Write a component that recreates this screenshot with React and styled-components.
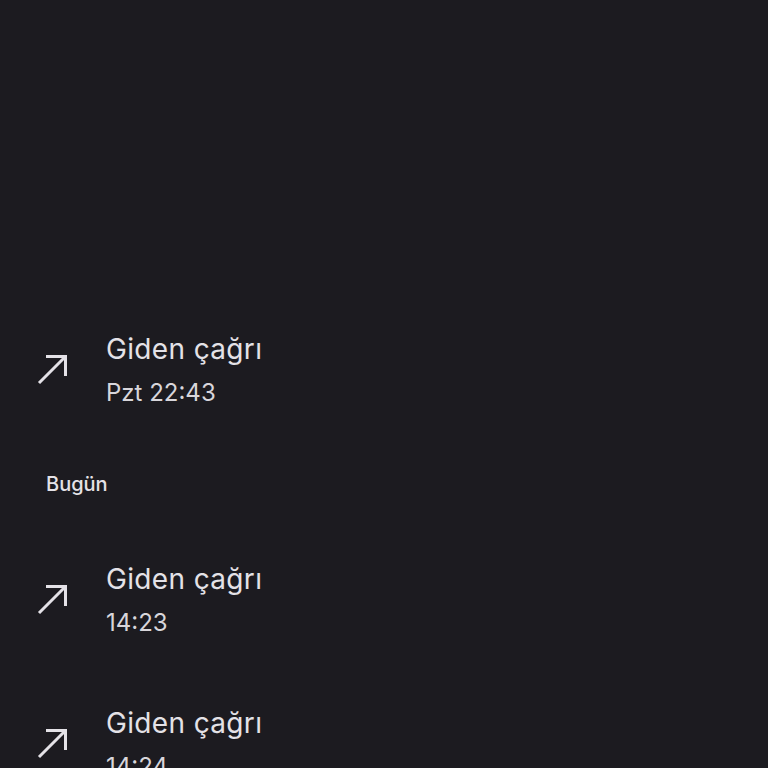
import React from 'react'
import styled, { createGlobalStyle } from 'styled-components'

const GlobalStyle = createGlobalStyle`
    html, body {
        margin: 0;
        padding: 0;
        background-color: #1c1b20;
    }
    body {
        font-family: Inter, Roboto, sans-serif;
        color: #e4e2e7;
    }
`

const Screen = styled.main`
    width: 768px;
    height: 768px;
    overflow: hidden;
    background-color: #1c1b20;
    padding-top: 297px;
    box-sizing: border-box;
`

const CallRow = styled.div`
    height: 144px;
    display: flex;
    align-items: center;
    padding-left: 36px;
`

const IconBox = styled.div`
    width: 70px;
    display: flex;
    align-items: center;
    color: #e4e2e7;
`

const Texts = styled.div`
    display: flex;
    flex-direction: column;
    gap: 11px;
`

const Title = styled.span`
    font-size: 28px;
    line-height: 36px;
    letter-spacing: 0.35px;
    color: #e4e2e7;
`

const Sub = styled.span`
    font-size: 24px;
    line-height: 30px;
    color: #d8d6db;
`

const DayHeader = styled.div`
    height: 86px;
    display: flex;
    align-items: center;
    padding-left: 46px;
    font-size: 20px;
    font-weight: 500;
    color: #e4e2e7;
`

const OutgoingIcon = () => (
    <svg width="32" height="32" viewBox="0 0 32 32" fill="none">
        <path d="M3 30 L30 3 M10 3.5 H29.5 V23" stroke="currentColor" strokeWidth="3" />
    </svg>
)

const Call = ({ time }) => (
    <CallRow>
        <IconBox>
            <OutgoingIcon />
        </IconBox>
        <Texts>
            <Title>Giden çağrı</Title>
            <Sub>{time}</Sub>
        </Texts>
    </CallRow>
)

export default function App() {
    return (
        <>
            <GlobalStyle />
            <Screen>
                <Call time="Pzt 22:43" />
                <DayHeader>Bugün</DayHeader>
                <Call time="14:23" />
                <Call time="14:24" />
            </Screen>
        </>
    )
}
